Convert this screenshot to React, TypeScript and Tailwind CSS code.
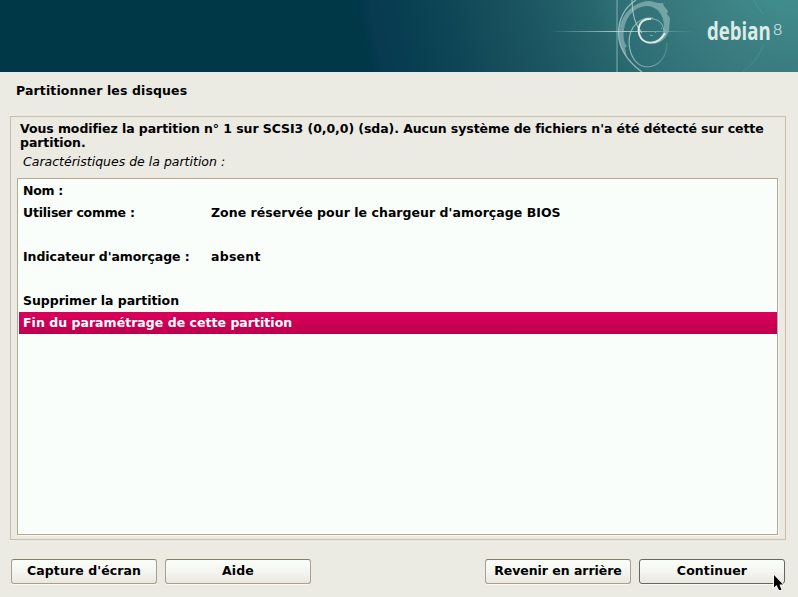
import React from "react";

type Row = { label: string; labelClass?: string; value?: string; valueClass?: string; selected?: boolean };

const rows: Row[] = [
  { label: "Nom :", labelClass: "tracking-[-0.3px]" },
  {
    label: "Utiliser comme :",
    labelClass: "tracking-[-0.22px]",
    value: "Zone réservée pour le chargeur d'amorçage BIOS",
    valueClass: "tracking-[0.04px]",
  },
  { label: "" },
  {
    label: "Indicateur d'amorçage :",
    labelClass: "tracking-[-0.06px]",
    value: "absent",
    valueClass: "tracking-[0.25px]",
  },
  { label: "" },
  { label: "Supprimer la partition", labelClass: "tracking-[-0.04px]" },
  { label: "Fin du paramétrage de cette partition", labelClass: "tracking-[0.03px]", selected: true },
];

function Banner() {
  return (
    <header className="h-[72px] shrink-0 bg-[#003848]">
      <svg width="798" height="72" viewBox="0 0 798 72" className="block" fill="none">
        <defs>
          <radialGradient id="sea" gradientUnits="userSpaceOnUse" cx="800" cy="-50" r="446">
            <stop offset="0" stopColor="#429391" />
            <stop offset="0.12" stopColor="#408c8c" />
            <stop offset="0.27" stopColor="#3a7c80" />
            <stop offset="0.42" stopColor="#2f7076" />
            <stop offset="0.5" stopColor="#26646b" />
            <stop offset="0.6" stopColor="#1d5864" />
            <stop offset="0.7" stopColor="#174f5c" />
            <stop offset="0.8" stopColor="#0f4657" />
            <stop offset="0.89" stopColor="#083f51" />
            <stop offset="0.97" stopColor="#083a50" />
            <stop offset="1" stopColor="#003848" />
          </radialGradient>
          <linearGradient id="flare" gradientUnits="userSpaceOnUse" x1="549" y1="0" x2="694" y2="0">
            <stop offset="0" stopColor="#b8dcda" stopOpacity="0" />
            <stop offset="0.5" stopColor="#c8e2e0" stopOpacity="0.85" />
            <stop offset="1" stopColor="#b8dcda" stopOpacity="0" />
          </linearGradient>
          <linearGradient id="loop" gradientUnits="userSpaceOnUse" x1="628" y1="0" x2="668" y2="0">
            <stop offset="0" stopColor="#b4d2d0" stopOpacity="0.75" />
            <stop offset="0.6" stopColor="#b4d2d0" stopOpacity="0.5" />
            <stop offset="1" stopColor="#b4d2d0" stopOpacity="0.2" />
          </linearGradient>
        </defs>
        <path d="M340 0H798V72H340Z" fill="url(#sea)" />
        <path d="M617 0V72" stroke="#8cb8b8" strokeOpacity=".45" strokeWidth="2" />
        <rect x="549" y="31" width="145" height="1" fill="url(#flare)" />
        <path d="M743 72Q757 61 764 44M763 14L753 0" stroke="#8ab8b8" strokeOpacity=".22" />
        <path d="M642 72C627 61 619 49 618.500 34C618.500 20 624 8 636 0" stroke="#b4d0cf" strokeOpacity=".75" strokeWidth="1.300" />
        <path
          d="M627 57C619 48 617 33 621 22C626 9 638 1 650 1L658 3L663 3L664 6L668 11L667 14L670 18L669 30C667 38 661 44 651 44C659 41 664 35 664 27C664 14 657 6 646 6C636 7 628 14 625 25C622 35 624 43 627 46L625 48Z"
          fill="#a0c4c4"
          fillOpacity=".58"
        />
        <path d="M632 0C632 14 635 25 642 33" stroke="#b8d4d2" strokeOpacity=".75" strokeWidth="1.200" />
        <path d="M653 18C641 17 629 25 629 43C630 57 637 67 648 67C659 66 667 57 667 43" stroke="url(#loop)" strokeWidth="1.200" />
        <path d="M651 19C640 18 637 28 639.500 35C643 45 658 46 665 33" stroke="#dde8e2" strokeWidth="2" />
        <path d="M649 19C657 18 663 22 664 31" stroke="#b8d2ce" strokeOpacity=".7" />
        <path d="M650 35.500H653M655 32.500H656M661 28.500H662" stroke="#a2c8c5" strokeOpacity=".6" />
        <text
          transform="translate(707 40) scale(.745 1)"
          fill="#dcebe8"
          fontFamily="Open Sans, sans-serif"
          fontSize="25"
          fontWeight="700"
        >
          debian
        </text>
        <text
          transform="translate(773 35) scale(1.15 1)"
          fill="#d3e5e2"
          fontFamily="Roboto, sans-serif"
          fontSize="14.5"
          fontWeight="300"
        >
          8
        </text>
      </svg>
    </header>
  );
}

function Button({ label, textClass, primary = false }: { label: string; textClass: string; primary?: boolean }) {
  return (
    <button
      className={
        "h-[25px] w-[146px] rounded-[3px] border bg-linear-to-b from-[#fbfdf8] via-[#f5f6f2] to-[#e9e8df] pb-[2px] text-center leading-[21px] whitespace-nowrap shadow-[0_1px_0_#f8f8f4] " +
        (primary ? "border-[#69665a]" : "border-[#a99f8a] border-t-[#858069]")
      }
    >
      <span className={textClass}>{label}</span>
    </button>
  );
}

export default function App() {
  return (
    <div className="relative flex h-[597px] w-[798px] flex-col overflow-hidden bg-[#ebeae3] font-['DejaVu_Sans',sans-serif] text-[12.5px] font-bold text-black">
      <Banner />
      <h1 className="mt-[11px] ml-4 h-[33px] text-[12.5px] leading-4 font-bold tracking-[0.12px] whitespace-nowrap">
        Partitionner les disques
      </h1>
      <main className="mr-3 ml-[10px] flex h-[424px] flex-col border border-[#c8beab] px-[6px] pt-[5px]">
        <p className="ml-[3px] h-7 leading-[14px] tracking-[-0.07px] whitespace-nowrap">
          Vous modifiez la partition n° 1 sur SCSI3 (0,0,0) (sda). Aucun système de fichiers n'a été détecté sur cette
          <br />
          partition.
        </p>
        <p className="mt-[4px] ml-[6px] h-4 leading-4 font-normal italic">Caractéristiques de la partition :</p>
        <div className="mt-[8px] h-[357px] w-[761px] border border-[#b5a993] bg-[#f9fefa] pt-px pl-px shadow-[1px_1px_0_#f8f7f2]">
          {rows.map((row, i) => (
            <div
              key={i}
              className={
                "flex h-[22px] pl-1 leading-[21px] whitespace-nowrap " +
                (row.selected ? "bg-linear-to-b from-[#dc005b] to-[#bc004d] text-white" : "")
              }
            >
              <span className={(row.value ? "w-[188px] " : "") + (row.labelClass ?? "")}>{row.label}</span>
              {row.value && <span className={row.valueClass}>{row.value}</span>}
            </div>
          ))}
        </div>
      </main>
      <footer className="mt-[19px] mr-[13px] ml-[11px] flex gap-2">
        <Button label="Capture d'écran" textClass="tracking-[0.1px]" />
        <Button label="Aide" textClass="tracking-[0.1px]" />
        <div className="grow" />
        <Button label="Revenir en arrière" textClass="tracking-[-0.04px]" />
        <Button label="Continuer" textClass="tracking-[0.1px]" primary />
      </footer>
      <svg className="absolute top-[573px] left-[772px]" width="14" height="20" viewBox="-1 -1 14 20">
        <path
          d="M1 1V13.500L3.500 11L6 16H8.500L6.500 10.500H10Z"
          fill="#000"
          stroke="#fff"
          strokeWidth="1.400"
          paintOrder="stroke"
        />
      </svg>
    </div>
  );
}
